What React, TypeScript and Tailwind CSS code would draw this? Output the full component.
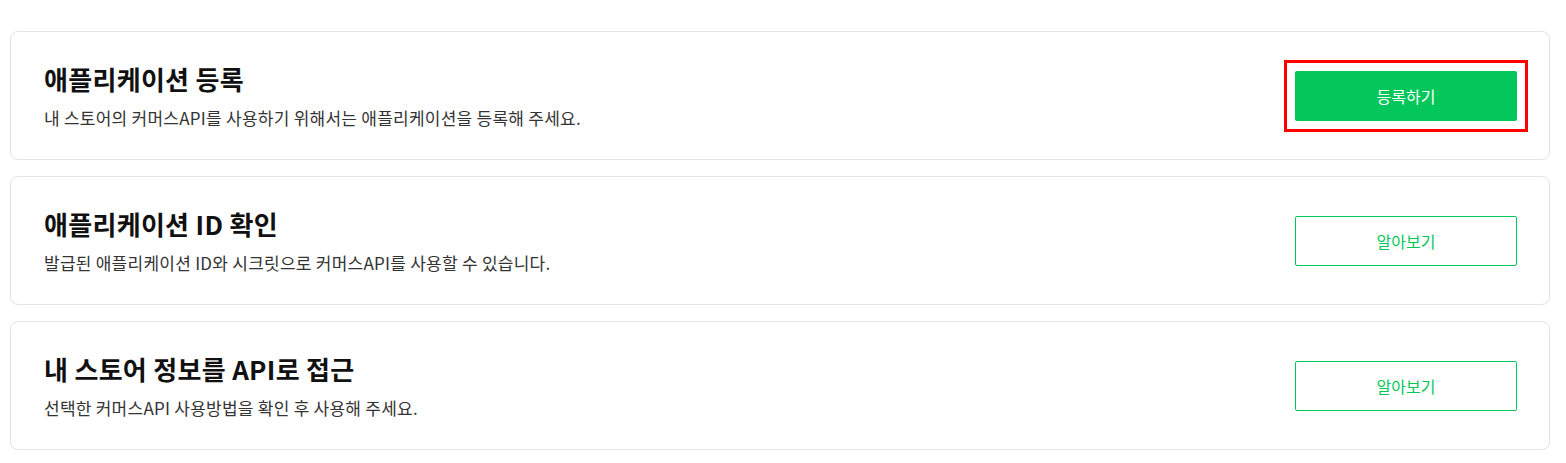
import React from "react";

type Item = {
  title: string;
  desc: string;
  button: string;
  primary?: boolean;
};

const items: Item[] = [
  {
    title: "애플리케이션 등록",
    desc: "내 스토어의 커머스API를 사용하기 위해서는 애플리케이션을 등록해 주세요.",
    button: "등록하기",
    primary: true,
  },
  {
    title: "애플리케이션 ID 확인",
    desc: "발급된 애플리케이션 ID와 시크릿으로 커머스API를 사용할 수 있습니다.",
    button: "알아보기",
  },
  {
    title: "내 스토어 정보를 API로 접근",
    desc: "선택한 커머스API 사용방법을 확인 후 사용해 주세요.",
    button: "알아보기",
  },
];

export default function App() {
  return (
    <div
      className="min-h-[463px] bg-white pl-[10px] pr-[16px] pt-[31px]"
      style={{ fontFamily: '"Noto Sans CJK KR", "Noto Sans", sans-serif' }}
    >
      <div className="flex flex-col gap-[16px]">
        {items.map((it, i) => (
          <div
            key={i}
            className="flex h-[129px] items-center justify-between rounded-[8px] border border-[#e3e3e3] bg-white pl-[33px] pr-[32px]"
          >
            <div className="flex flex-col">
              <h2 className="text-[26px] font-bold leading-[34px] tracking-[0.3px] text-[#111111]">
                {it.title}
              </h2>
              <p className="mt-[10px] text-[17px] leading-[24px] tracking-[0.25px] text-[#333333]">
                {it.desc}
              </p>
            </div>
            {it.primary ? (
              <button className="relative h-[50px] w-[222px] rounded-[2px] bg-[#03c75a] text-[16px] text-white">
                {it.button}
                <span className="pointer-events-none absolute -inset-[11px] border-[3px] border-[#ff0000]" />
              </button>
            ) : (
              <button className="h-[50px] w-[222px] rounded-[2px] border border-[#03c75a] bg-white text-[16px] text-[#03c75a]">
                {it.button}
              </button>
            )}
          </div>
        ))}
      </div>
    </div>
  );
}
